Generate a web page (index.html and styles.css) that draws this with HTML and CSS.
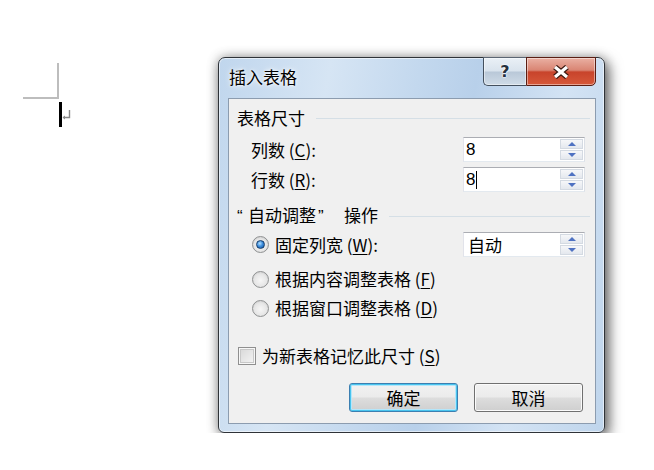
FILE: index.html
```html
<!DOCTYPE html>
<html lang="zh-CN">
<head>
    <meta charset="UTF-8">
    <meta name="viewport" content="width=device-width, initial-scale=1.0">
    <title>插入表格</title>
    <link rel="stylesheet" href="styles.css">
</head>
<body>
    <div class="desk">
        <div class="doc-mark">
            <div class="corner"></div>
            <div class="caret-row">
                <span class="caret"></span>
                <svg class="para" width="9" height="10" viewBox="0 0 9 10">
                    <path d="M7.5 0 V7.5 H1.5" fill="none" stroke="#8a8a8a" stroke-width="1.4"/>
                    <path d="M0.5 7.5 L3 5.5 V9.5 Z" fill="#8a8a8a"/>
                </svg>
            </div>
        </div>

        <div class="dialog">
            <div class="titlebar">
                <span class="title">插入表格</span>
                <div class="caption-btns">
                    <span class="cap-btn help">?</span>
                    <span class="cap-btn close">
                        <svg width="20" height="14" viewBox="0 0 20 14">
                            <path d="M4 2 L16 12 M16 2 L4 12" stroke="#3b1810" stroke-width="5.6"/>
                            <path d="M4 2 L16 12 M16 2 L4 12" stroke="#fff" stroke-width="3.2"/>
                        </svg>
                    </span>
                </div>
            </div>

            <div class="client">
                <div class="group-head head-size"><span>表格尺寸</span><i class="rule"></i></div>

                <div class="field-row row-cols">
                    <span class="label">列数 (<u>C</u>):</span>
                    <div class="spin">
                        <span class="spin-val">8</span>
                        <span class="spin-btns"><b class="up"></b><b class="down"></b></span>
                    </div>
                </div>
                <div class="field-row row-rows">
                    <span class="label">行数 (<u>R</u>):</span>
                    <div class="spin">
                        <span class="spin-val">8<i class="text-caret"></i></span>
                        <span class="spin-btns"><b class="up"></b><b class="down"></b></span>
                    </div>
                </div>

                <div class="group-head head-auto"><span><q class="lq">“</q>自动调整<q class="rq">”</q>操作</span><i class="rule"></i></div>

                <div class="field-row opt-fixed">
                    <span class="option"><span class="radio checked"></span>固定列宽 (<u>W</u>):</span>
                    <div class="spin">
                        <span class="spin-val cjk">自动</span>
                        <span class="spin-btns"><b class="up"></b><b class="down"></b></span>
                    </div>
                </div>
                <div class="field-row opt-content">
                    <span class="option"><span class="radio"></span>根据内容调整表格 (<u>F</u>)</span>
                </div>
                <div class="field-row opt-window">
                    <span class="option"><span class="radio"></span>根据窗口调整表格 (<u>D</u>)</span>
                </div>

                <div class="remember">
                    <span class="checkbox"></span>为新表格记忆此尺寸 (<u>S</u>)
                </div>

                <div class="actions">
                    <button type="button" class="btn default">确定</button>
                    <button type="button" class="btn">取消</button>
                </div>
            </div>
        </div>
    </div>
</body>
</html>
```

FILE: styles.css
```css
body {
    margin: 0;
    background-color: #fff;
    font-family: "Noto Sans CJK SC", sans-serif;
    color: #000;
}
.desk {
    display: flex;
    align-items: flex-start;
    padding: 57px 0 0 23px;
}
.doc-mark {
    flex: 0 0 195px;
    padding-top: 6px;
}
.corner {
    width: 34px;
    height: 34px;
    border-right: 2px solid #bdbdbd;
    border-bottom: 2px solid #bdbdbd;
}
.caret-row {
    display: flex;
    margin: 3px 0 0 36px;
}
.caret {
    width: 3px;
    height: 25px;
    background-color: #000;
}
.para {
    margin: 8px 0 0 0;
}

/* window frame */
.dialog {
    box-sizing: border-box;
    width: 387px;
    height: 376px;
    padding: 0 8px 8px 9px;
    border: 1px solid #2f3338;
    border-radius: 7px 7px 6px 6px;
    background: linear-gradient(100deg, #c0d6ed 0%, #d6e5f4 25%, #c3d8ee 45%, #b8d0ea 58%, #d3e3f4 78%, #bfd5ec 100%);
    box-shadow: inset 0 0 0 1px rgba(255, 255, 255, 0.55), 4px 5px 14px rgba(0, 0, 0, 0.55), 0 0 12px rgba(0, 0, 0, 0.3);
}
.titlebar {
    height: 40px;
    display: flex;
    justify-content: space-between;
    align-items: flex-start;
}
.title {
    padding: 9px 0 0 1px;
    font-size: 17px;
    line-height: 20px;
    text-shadow: 0 0 6px #fff, 0 0 3px #fff;
}
.caption-btns {
    display: flex;
    margin: -1px 0 0 0;
}
.cap-btn {
    box-sizing: border-box;
    height: 29px;
    display: flex;
    align-items: center;
    justify-content: center;
    border: 1px solid #44505e;
    border-top-color: #5b6572;
    box-shadow: inset 0 0 0 1px rgba(255, 255, 255, 0.45);
}
.help {
    width: 43px;
    border-right: none;
    border-radius: 0 0 0 5px;
    background: linear-gradient(#eaf0f6 0%, #d9e3ed 48%, #b9c8d8 52%, #cfdbe7 100%);
    font-family: "DejaVu Sans", sans-serif;
    font-weight: bold;
    font-size: 16px;
    color: #26313f;
    text-shadow: 0 0 2px #fff, 0 0 2px #fff, 0 0 1px #fff;
}
.close {
    width: 70px;
    border-color: #5a1d12;
    border-radius: 0 0 5px 0;
    background: linear-gradient(#eab0a3 0%, #d98573 45%, #c8442b 52%, #d6583a 100%);
}

/* client area */
.client {
    box-sizing: border-box;
    height: 326px;
    padding: 7px 10px 0 8px;
    border: 1px solid #8c9caf;
    background-color: #f0f0f0;
    font-size: 17px;
    line-height: 20px;
}
.group-head {
    height: 24px;
    display: flex;
    align-items: center;
    margin-right: -5px;
}
.group-head q {
    quotes: none;
    display: inline-block;
    font-family: "Liberation Sans", sans-serif;
}
.group-head .lq { width: 11px; }
.group-head .rq { width: 26px; padding-left: 2px; }
.rule {
    flex: 1;
    height: 1px;
    margin-left: 11px;
    background-color: #d5dfe6;
}
.head-auto { margin-top: 12px; }

.field-row {
    height: 25px;
    display: flex;
    justify-content: space-between;
    align-items: center;
}
.label {
    padding-left: 14px;
}
u {
    text-decoration-thickness: 1px;
    text-underline-offset: 2px;
}
.row-cols { margin-top: 7px; }
.row-rows { margin-top: 5px; }
.opt-fixed { margin-top: 4px; }
.opt-content { height: 26px; margin-top: 9px; }
.opt-window { height: 26px; margin-top: 3px; }

.spin {
    box-sizing: border-box;
    width: 122px;
    height: 25px;
    display: flex;
    border: 1px solid #abadb3;
    border-color: #abadb3 #dbdfe6 #e3e9ef #e2e3ea;
    background-color: #fff;
}
.spin-val {
    flex: 1;
    display: flex;
    align-items: center;
    padding-left: 2px;
    font-family: "Liberation Sans", sans-serif;
    font-size: 17px;
}
.spin-val.cjk {
    font-family: "Noto Sans CJK SC", sans-serif;
    padding-left: 4px;
}
.text-caret {
    width: 1px;
    height: 18px;
    margin-left: 1px;
    background-color: #000;
}
.spin-btns {
    width: 23px;
    display: flex;
    flex-direction: column;
    gap: 1px;
    padding: 1px 1px 1px 0;
}
.spin-btns b {
    flex: 1;
    display: flex;
    align-items: center;
    justify-content: center;
    border: 1px solid #d4dae2;
    background: linear-gradient(#f6f7f9, #e4e8ee);
}
.spin-btns b::after {
    content: "";
    border-left: 4px solid transparent;
    border-right: 4px solid transparent;
}
.spin-btns .up::after { border-bottom: 4px solid #4f72c2; }
.spin-btns .down::after { border-top: 4px solid #4f72c2; }

.option {
    display: flex;
    align-items: center;
    padding-left: 15px;
}
.radio {
    box-sizing: border-box;
    width: 17px;
    height: 17px;
    margin-right: 6px;
    display: flex;
    align-items: center;
    justify-content: center;
    border: 1px solid #8f9192;
    border-radius: 50%;
    background: radial-gradient(circle at 50% 55%, #f6f6f6 0%, #e6e6e6 55%, #d4d4d4 75%, #f3f3f3 100%);
}
.radio.checked::after {
    content: "";
    width: 9px;
    height: 9px;
    box-sizing: border-box;
    border-radius: 50%;
    border: 1px solid #173e6b;
    background: radial-gradient(circle at 40% 35%, #b5e1ff 0%, #3f8fde 45%, #0e4f9a 100%);
}

.remember {
    height: 26px;
    margin-top: 22px;
    display: flex;
    align-items: center;
    padding-left: 1px;
}
.checkbox {
    box-sizing: border-box;
    width: 18px;
    height: 18px;
    margin-right: 6px;
    border: 1px solid #8f8f8f;
    background: linear-gradient(135deg, #d6d6d6, #f6f6f6);
    box-shadow: inset 0 0 0 1px #f7f7f7, inset 0 0 0 2px #c8c8c8;
}

.actions {
    display: flex;
    justify-content: flex-end;
    gap: 16px;
    margin: 14px 2px 0 0;
}
.btn {
    width: 109px;
    height: 29px;
    padding: 0;
    border: 1px solid #707070;
    border-radius: 3px;
    background: linear-gradient(#f2f2f2 0%, #ebebeb 48%, #dddddd 52%, #cfcfcf 100%);
    box-shadow: inset 0 0 0 1px #fbfbfb;
    font-family: "Noto Sans CJK SC", sans-serif;
    font-size: 17px;
    line-height: 20px;
    color: #000;
}
.btn.default {
    border-color: #3c7fb1;
    box-shadow: inset 0 0 0 1px #48c4ee, inset 0 0 0 2px #b5e6fa;
}
```
